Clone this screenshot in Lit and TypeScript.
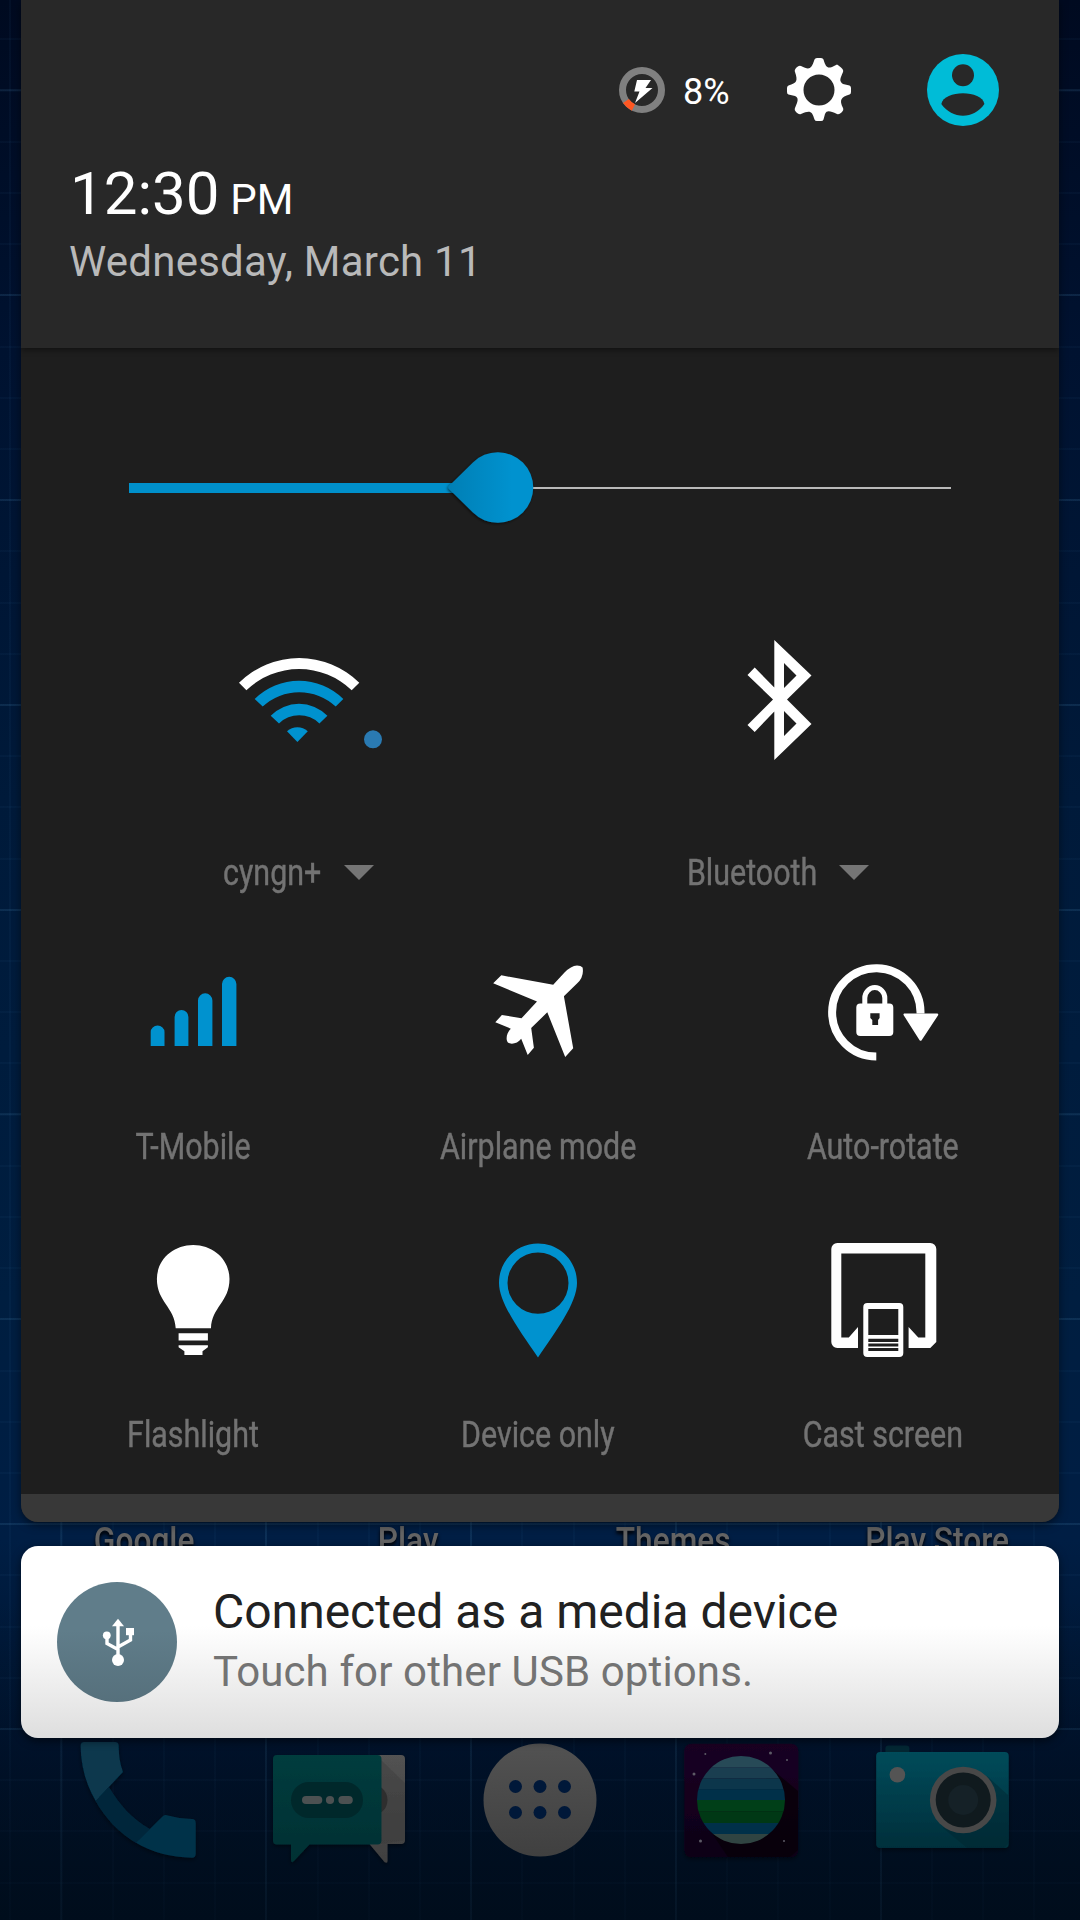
import { LitElement, html, svg, css, TemplateResult } from "lit";
import { customElement, property } from "lit/decorators.js";

const wifi = svg`
  <path fill="#fff" d="M239 682.7A85.7 85.7 0 0 1 359.3 682.7L351.7 690.3A76 76 0 0 0 246.4 690.3Z"/>
  <g fill="#0092cf">
    <path d="M254.7 699A63 63 0 0 1 343.3 699L335.7 706.6A53.7 53.7 0 0 0 262.7 706.6Z"/>
    <path d="M270.7 715.8A39.5 39.5 0 0 1 327.4 715.8L319.4 723.4A29 29 0 0 0 279 723.4Z"/>
    <path d="M287 731.2A16 16 0 0 1 307.8 731.2L297.4 742Z"/>
  </g>
  <circle cx="373" cy="739.3" r="9" fill="#2a7ab2"/>`;

const bluetooth = svg`
  <path fill="#fff" fill-rule="evenodd" d="M774.3 640L811.5 675.5L787 699.5L811.5 724L774.3 760V711.5L754.7 732L747.5 725L773 699.5L747.5 675L754.7 667.5L774.3 687.5ZM784 663V688L796.5 675.5ZM784 711V736L796.5 723.5Z"/>`;

const signal = svg`
  <path fill="#0092cf" d="M151 1046V1032a6.9 6.4 0 0 1 13.8 0V1046ZM174.9 1046V1017a6.9 6.9 0 0 1 13.8 0V1046ZM198.3 1046V1000.5a7.2 7.2 0 0 1 14.4 0V1046ZM222.3 1046V984a7.2 7.2 0 0 1 14.4 0V1046Z"/>`;

const airplane = svg`
  <path fill="#fff" d="M553.2 984.7L564.5 972.6Q571 966 577 965.6Q581 965.6 582.6 967.5Q584.3 977 577 983.5L563.9 996.2L573.2 1048.3L565.2 1056.9L547.3 1012.3L531.2 1028L533.9 1047.7L527.7 1055.1L521.2 1038.8C518 1043.5 511 1045 507.9 1042.5C505 1038.5 507.5 1032 510.8 1028.7L495.3 1022.3L501.9 1015L521.5 1018.3L537 1001.6L493.2 983.3L501.3 975.3Z"/>`;

const autoRotate = svg`
  <path fill="none" stroke="#fff" stroke-width="8" d="M876 1056.6A44.2 44.2 0 1 1 920.2 1013.5"/>
  <path fill="#fff" stroke="#fff" stroke-width="2.4" stroke-linejoin="round" d="M904.4 1014.6H936.8L920.3 1039.500Z"/>
  <path fill="none" stroke="#fff" stroke-width="5" d="M864.5 1005v-7a10 10.4 0 0 1 20 0v7"/>
  <path fill="#fff" fill-rule="evenodd" d="M860 1003.5h29a4 4 0 0 1 4 4v24.500a4 4 0 0 1-4 4h-29a4 4 0 0 1-4-4v-24.500a4 4 0 0 1 4-4zM870 1013.300v4.700l2 2v5h5.800v-5l1.500-2v-4.700z"/>`;

const bulb = svg`
  <path fill="#fff" d="M193.500 1245C214 1245 229.800 1260 229.800 1279C229.800 1302 212 1307 211.300 1328.300H176C175 1307 157.200 1302 157.200 1279C157.200 1260 173 1245 193.500 1245ZM178.900 1333.300h29.300v7.200h-29.300zM178.900 1345.200h29.300v2l-5.400 4V1355h-18.100v-3.800l-5.800-4z"/>`;

const pin = svg`
  <path fill="#0092cf" fill-rule="evenodd" d="M538 1243.600C560 1243.600 577 1261 577 1283C577 1303 556 1331 538 1357.600C520 1331 499 1303 499 1283C499 1261 516 1243.600 538 1243.600ZM538 1252.400a30.500 30.700 0 1 0 0 61.400a30.500 30.700 0 1 0 0-61.400z"/>`;

const cast = svg`
  <path fill="#fff" d="M837 1243h93a6 6 0 0 1 6 6v93l-6 6h-21.700v-21l9.700 10.500h7V1253.500H841v84h7.500l9.200-10.500v21H837a6 6 0 0 1-6-6v-93a6 6 0 0 1 6-6z"/>
  <path fill="#fff" fill-rule="evenodd" d="M867 1303h32a4 4 0 0 1 4 4v46a4 4 0 0 1-4 4h-32a4 4 0 0 1-4-4v-46a4 4 0 0 1 4-4zM868 1309v26h30v-26zM868 1338.800v3.200h30v-3.200zM868 1343.600v3h30v-3zM868 1348v3h30v-3z"/>`;

@customElement("quick-tile")
class QuickTile extends LitElement {
  @property() label = "";
  @property() box = "0 0 140 120";
  @property({ type: Boolean }) menu = false;
  @property({ attribute: false }) icon?: TemplateResult;
  static styles = css`
    :host { display: flex; flex-direction: column; align-items: center; gap: var(--tile-gap); }
    svg { display: block; overflow: visible; }
    .caption { display: flex; align-items: center; height: 40px; }
    .label { font: 36px/40px Roboto, sans-serif; color: #737373; -webkit-text-stroke: 0.45px #737373; white-space: nowrap; transform: scaleX(0.845); }
    .menu .label { transform-origin: right; }
    .menu { padding-right: var(--trim, 0px); }
    .arrow { width: 0; margin-left: 22px; border: 15px solid transparent; border-top-color: #757575; border-bottom: 0; margin-bottom: 1px; }
  `;
  render() {
    return html`
      <svg width="140" height="120" viewBox=${this.box}>${this.icon}</svg>
      <div class="caption ${this.menu ? "menu" : ""}">
        <span class="label">${this.label}</span>
        ${this.menu ? html`<span class="arrow"></span>` : ""}
      </div>`;
  }
}

@customElement("home-dock")
class HomeDock extends LitElement {
  static styles = css`
    :host { display: block; }
    svg { display: block; }
  `;
  render() {
    return html`<svg width="1080" height="180" viewBox="0 1730 1080 180">
      <defs>
        <filter id="sh" x="-20%" y="-20%" width="140%" height="140%"><feDropShadow dx="0" dy="2" stdDeviation="2" flood-color="#000" flood-opacity=".45"/></filter>
        <linearGradient id="teal" x2="0" y2="1"><stop stop-color="#043c3d"/><stop offset="1" stop-color="#003033"/></linearGradient>
        <linearGradient id="grey" x2="0" y2="1"><stop stop-color="#525252"/><stop offset="1" stop-color="#404040"/></linearGradient>
        <linearGradient id="cam" x2="0" y2="1"><stop stop-color="#044b5a"/><stop offset="1" stop-color="#002f3b"/></linearGradient>
        <linearGradient id="plum" x2="0" y2="1"><stop stop-color="#1a0424"/><stop offset="1" stop-color="#0d0116"/></linearGradient>
        <clipPath id="planet"><circle cx="741" cy="1800" r="44"/></clipPath>
      </defs>
      <g filter="url(#sh)">
        <path fill="#04263b" d="M109 1787C119 1804 132 1819 150 1829L136 1843C119 1833 105 1818 95.500 1801Z"/>
        <path fill="#08374d" d="M84 1742H115Q118.800 1742 118.800 1746Q118.500 1760 123 1772L95.700 1801Q81 1776 80.600 1746Q80.600 1742 84 1742Z"/>
        <path fill="#003349" d="M136 1842.700L163 1816Q165 1814.500 168 1815.500Q180 1819 192 1819Q195.700 1819 195.700 1823V1854Q195.700 1857.700 192 1857.700Q160 1857 136 1842.700Z"/>
      </g>
      <g filter="url(#sh)">
        <path fill="url(#grey)" d="M330 1755h71q4 0 4 4v81q0 4-4 4h-13.500v17q0 3-3 1l-15-18h-39z"/>
        <path fill="#363636" d="M381 1760L405 1783V1840L381 1844Z" opacity=".35"/>
        <circle cx="372" cy="1800" r="15.500" fill="#2e2e2e"/>
        <path fill="url(#teal)" d="M277 1755h100.500q4 0 4 4v81.500q0 4-4 4h-68l-15 16q-3.500 4-3.500-1v-15h-14q-4 0-4-4v-81.500q0-4 4-4z"/>
      </g>
      <rect x="291" y="1782" width="72" height="36" rx="18" fill="#00282b"/>
      <g fill="#4c5152"><rect x="302" y="1796" width="20.300" height="8" rx="4"/><circle cx="330" cy="1800" r="4.100"/><rect x="338.400" y="1796" width="14.400" height="8" rx="4"/></g>
      <circle cx="540" cy="1800" r="56.500" fill="url(#grey)"/>
      <g fill="#001839">${[515.5, 540, 564.5].map((x) => [1786.5, 1812.5].map((y) => svg`<circle cx=${x} cy=${y} r="6.500"/>`))}</g>
      <rect x="684.300" y="1743.700" width="114" height="113.500" rx="7" fill="url(#plum)" filter="url(#sh)"/>
      <path fill="#080009" opacity=".8" d="M774 1771L798 1791V1850L790 1857H728L711 1832Z"/>
      <g clip-path="url(#planet)">
        ${[
          [1755, 12.5, "#274a57"], [1767.3, 11.2, "#1a3e50"], [1778.4, 10.8, "#0c364b"], [1789.1, 11.1, "#003049"],
          [1800, 11.5, "#003f18"], [1811.3, 11.7, "#003815"], [1823, 11, "#003049"], [1834, 11, "#304442"],
        ].map(([y, h, c]) => svg`<rect x="696" y=${y} width="90" height=${h} fill=${c}/>`)}
      </g>
      <g fill="#5d5a66"><circle cx="770.500" cy="1753" r="1.500"/><circle cx="705.300" cy="1754" r="1"/><circle cx="787" cy="1760" r="1"/><circle cx="694" cy="1774" r="1.500"/><circle cx="700.500" cy="1841" r="1.500"/><circle cx="784" cy="1841" r="1"/></g>
      <rect x="885.400" y="1745.500" width="24" height="12" rx="3" fill="#032834"/>
      <rect x="876.200" y="1752" width="132.500" height="96" rx="4" fill="url(#cam)" filter="url(#sh)"/>
      <path fill="#00242e" opacity=".4" d="M987 1776L1008 1795V1844L1004 1848H967L943 1828Z"/>
      <circle cx="897.400" cy="1774.700" r="7.800" fill="#545454"/>
      <circle cx="963.200" cy="1800" r="33.300" fill="#484848"/>
      <circle cx="963.200" cy="1800" r="27.500" fill="#101a1e"/>
      <circle cx="963.200" cy="1800" r="15" fill="#152127"/>
    </svg>`;
  }
}

@customElement("app-root")
class AppRoot extends LitElement {
  static styles = css`
    :host { display: block; font-family: Roboto, sans-serif; }
    .screen { display: grid; width: 1080px; height: 1920px; overflow: hidden; }
    .home, .shade { grid-area: 1 / 1; min-width: 0; }
    .home {
      display: flex; flex-direction: column; padding-top: 1517px; box-sizing: border-box;
      background:
        linear-gradient(180deg, transparent 1600px, rgba(0,13,28,.6) 1920px),
        repeating-linear-gradient(180deg, transparent 0 89.500px, rgba(70,130,170,.14) 89.500px 91.500px, transparent 91.500px 204.800px),
        repeating-linear-gradient(90deg, transparent 0 60.500px, rgba(70,130,170,.13) 60.500px 62.500px, transparent 62.500px 204.800px),
        repeating-linear-gradient(180deg, transparent 0 38.500px, rgba(60,120,170,.055) 38.500px 40.500px, transparent 40.500px 51.200px),
        repeating-linear-gradient(90deg, transparent 0 9.500px, rgba(60,120,170,.055) 9.500px 11.500px, transparent 11.500px 51.200px),
        linear-gradient(180deg, #000a20 0, #001230 350px, #001a3a 800px, #001e40 1300px, #001e44 1540px, #001735 1680px, #00132e 1750px, #000d1c 1920px);
    }
    .names { display: grid; grid-template-columns: repeat(4, 264.300px); padding-left: 12px; height: 213px; }
    .names span { text-align: center; font-size: 36px; font-weight: 500; line-height: 48px; color: #646464; transform: scaleX(.88); text-shadow: 0 3px 4px #000; white-space: nowrap; }
    .shade { position: relative; display: flex; flex-direction: column; gap: 24px; padding: 0 21px; }
    .panel { height: 1522px; border-radius: 0 0 17px 17px; overflow: hidden; background: #1e1e1e; display: flex; flex-direction: column; }
    .panel-wrap { border-radius: 0 0 17px 17px; box-shadow: 0 3px 8px rgba(0,0,0,.5); }
    .header { height: 348px; box-sizing: border-box; background: #282828; padding: 42px 60px 0 49px; box-shadow: 0 2px 6px rgba(0,0,0,.45); }
    .status { display: flex; justify-content: flex-end; align-items: center; height: 96px; }
    .battery { font-size: 36px; color: #fff; line-height: 44px; width: 102px; margin-left: 17px; padding-top: 3px; }
    .status svg { display: block; }
    .avatar { margin-left: 74px; }
    .time { color: #fff; font-size: 60px; line-height: 70px; margin-top: 21px; white-space: pre; }
    .time small { font-size: 42px; margin-left: -4px; }
    .date { color: #b9b9b9; font-size: 42px; line-height: 50px; margin: 2px 0 0 -1px; letter-spacing: .23px; }
    .slider { display: block; }
    .duo { display: grid; grid-template-columns: 480px 480px; padding-left: 37px; --tile-gap: 93px; }
    .first { --trim: 17px; }
    .second { --trim: 24px; }
    .trio { display: grid; grid-template-columns: repeat(3, 1fr); width: 1034px; --tile-gap: 57px; margin-top: 57px; }
    .trio.last { margin-top: 73px; --tile-gap: 55px; }
    .foot { height: 28px; margin-top: auto; background: #383838; }
    .notice { height: 192px; box-sizing: border-box; border-radius: 17px; display: flex; align-items: center; gap: 36px; padding-left: 36px;
      background: linear-gradient(180deg, #fff 0, #fff 80px, #dedede 192px); box-shadow: 0 3px 8px rgba(0,0,0,.55); }
    .title { font-size: 48px; line-height: 56px; color: #212121; margin-top: -4px; }
    .sub { font-size: 42px; line-height: 50px; color: #737373; margin-top: 7px; letter-spacing: .12px; }
    .notice svg { display: block; }
  `;
  render() {
    return html`
      <div class="screen">
        <div class="home">
          <div class="names"><span>Google</span><span>Play</span><span>Themes</span><span>Play Store</span></div>
          <home-dock></home-dock>
        </div>
        <div class="shade">
          <div class="panel-wrap"><div class="panel">
            <div class="header">
              <div class="status">
                <svg width="48" height="48" viewBox="-24 -24 48 48">
                  <circle r="19.500" fill="none" stroke="#808080" stroke-width="7"/>
                  <path fill="none" stroke="#ff5722" stroke-width="7" d="M-8.600 17.500A19.500 19.500 0 0 1 -16 11"/>
                  <path fill="#fff" d="M-5 -10H9L3.500 -2H10.500L-7 13L-2.500 1.500H-7.700Z"/>
                </svg>
                <span class="battery">8%</span>
                <svg width="68" height="68" viewBox="-34 -34 68 68">
                  <path fill="#fff" fill-rule="evenodd" d="M-4.500 -30.500Q-4 -32 -2 -32H2Q4 -32 4.500 -30.500C7 -22 9 -21 15 -24L18 -25.500Q19 -25 22 -22.500Q25 -20 24 -18C21 -11 20 -9 24 -6L30.500 -4.500Q32 -4 32 -2V2Q32 4 30.500 4.500C22 7 20 10 24 18Q25 20 22.500 22.500Q20 25 18 24C11 21 8 20 6 24L4.500 29.500Q4 31 2 31H-2Q-4 31 -4.500 29.500C-7 21 -9 20 -18 24Q-20 25 -22.500 22.500Q-25 20 -24 18C-21 11 -20 8 -24 6L-30.500 4.500Q-32 4 -32 2V-2Q-32 -4 -30.500 -4.500C-22 -7 -21 -9 -24 -18Q-25 -20 -22.500 -22.500Q-20 -25 -18 -24C-10 -20 -8 -20 -4.500 -30.500ZM0 -15.500A15.500 15.500 0 1 0 0 15.500A15.500 15.500 0 1 0 0 -15.500Z"/>
                </svg>
                <svg class="avatar" width="72" height="72" viewBox="-36 -36 72 72">
                  <circle r="36" fill="#00bcd7"/>
                  <circle cy="-14.700" r="11" fill="#282828"/>
                  <path fill="#282828" d="M-21.700 14C-19 -0.500 19 -0.500 21.400 14C11 29.500 -11 29.500 -21.700 14Z"/>
                </svg>
              </div>
              <div class="time">12:30 <small>PM</small></div>
              <div class="date">Wednesday, March 11</div>
            </div>
            <svg class="slider" width="1038" height="292" viewBox="21 348 1038 292">
              <defs>
                <linearGradient id="thumb" x2="1" y2="0"><stop stop-color="#007fb5"/><stop offset=".75" stop-color="#0092cf"/></linearGradient>
                <filter id="soft" x="-20%" y="-20%" width="140%" height="140%"><feDropShadow dx="-1" dy="1" stdDeviation="1.500" flood-color="#000" flood-opacity=".6"/></filter>
              </defs>
              <rect x="500" y="487" width="451" height="2" fill="#b9b9b9"/>
              <rect x="129" y="483" width="340" height="10" fill="#0090cb"/>
              <path fill="url(#thumb)" filter="url(#soft)" d="M449.500 485.500L473 462.500A35.300 35.300 0 1 1 473 512.500L449.500 489.500Q447.500 487.500 449.500 485.500Z"/>
            </svg>
            <div class="duo">
              <quick-tile class="first" menu label="cyngn+" box="228 640 140 120" .icon=${wifi}></quick-tile>
              <quick-tile class="second" menu label="Bluetooth" box="708 640 140 120" .icon=${bluetooth}></quick-tile>
            </div>
            <div class="trio">
              <quick-tile label="T-Mobile" box="123.300 950 140 120" .icon=${signal}></quick-tile>
              <quick-tile label="Airplane mode" box="468 950 140 120" .icon=${airplane}></quick-tile>
              <quick-tile label="Auto-rotate" box="812.700 950 140 120" .icon=${autoRotate}></quick-tile>
            </div>
            <div class="trio last">
              <quick-tile label="Flashlight" box="123.300 1240 140 120" .icon=${bulb}></quick-tile>
              <quick-tile label="Device only" box="468 1240 140 120" .icon=${pin}></quick-tile>
              <quick-tile label="Cast screen" box="812.700 1240 140 120" .icon=${cast}></quick-tile>
            </div>
            <div class="foot"></div>
          </div></div>
          <div class="notice">
            <svg width="120" height="120" viewBox="57 1582 120 120">
              <defs><linearGradient id="slate" x2="0" y2="1"><stop offset=".4" stop-color="#607d8a"/><stop offset="1" stop-color="#56707c"/></linearGradient></defs>
              <circle cx="117" cy="1642" r="60" fill="url(#slate)"/>
              <g fill="#fff">
                <path d="M118 1618.800L124 1626.300H112Z"/><circle cx="118" cy="1660" r="6"/><circle cx="106.800" cy="1635.300" r="3.900"/><rect x="126" y="1628" width="8" height="7.200"/>
              </g>
              <path fill="none" stroke="#fff" stroke-width="3.400" d="M118 1624V1656M107 1637V1643.500L118 1649.500M130.500 1633V1640L118 1647"/>
            </svg>
            <div>
              <div class="title">Connected as a media device</div>
              <div class="sub">Touch for other USB options.</div>
            </div>
          </div>
        </div>
      </div>`;
  }
}
